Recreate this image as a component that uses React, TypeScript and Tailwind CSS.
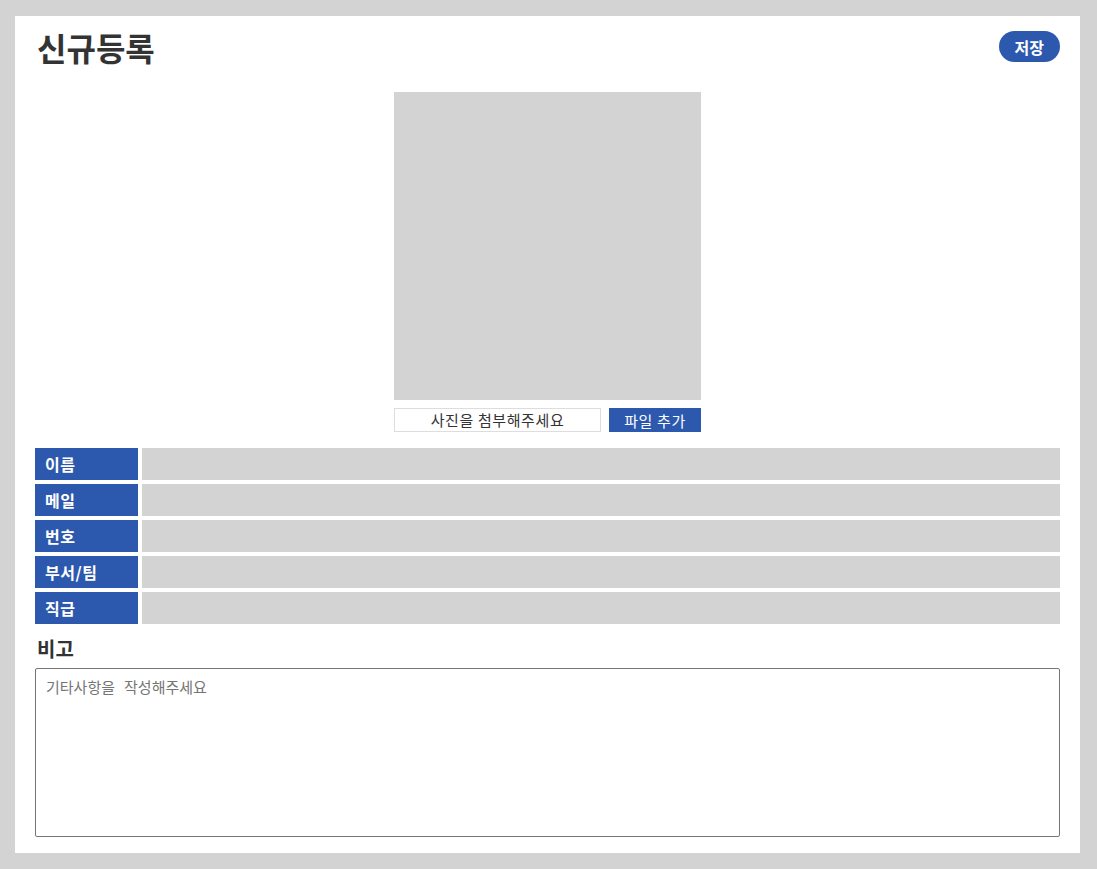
import React from 'react';

const fields = ['이름', '메일', '번호', '부서/팀', '직급'];

export default function App() {
    return (
        <div className="min-h-[869px] bg-[#d3d3d3] pl-[15px] pr-[17px] pt-[16px] pb-[16px] font-['Noto_Sans_CJK_KR',sans-serif]">
            <div className="bg-white px-[20px] pb-[16px]">
                {/* Header */}
                <div className="flex items-center justify-between h-[61px] pl-[2px]">
                    <h1 className="text-[32px] font-bold text-[#333] leading-none">신규등록</h1>
                    <button className="h-[31px] px-[16px] rounded-full bg-[#2c59ae] text-white text-[16px] font-bold leading-none">
                        저장
                    </button>
                </div>

                {/* Photo */}
                <div className="flex flex-col items-center mt-[15px]">
                    <div className="w-[307px] h-[308px] bg-[#d3d3d3]" />
                    <div className="flex gap-[8px] mt-[8px]">
                        <div className="w-[207px] h-[24px] border border-[#ddd] flex items-center justify-center text-[15px] tracking-[0.6px] text-[#333]">
                            사진을 첨부해주세요
                        </div>
                        <button className="w-[92px] h-[24px] bg-[#2c59ae] text-white text-[15px] tracking-[0.6px] leading-none">
                            파일 추가
                        </button>
                    </div>
                </div>

                {/* Fields */}
                <div className="flex flex-col gap-[4px] mt-[16px]">
                    {fields.map((f) => (
                        <div key={f} className="flex gap-[4px] h-[32px]">
                            <div className="w-[103px] bg-[#2c59ae] text-white text-[16px] tracking-[0.5px] font-bold flex items-center pl-[10px]">
                                {f}
                            </div>
                            <div className="flex-1 bg-[#d3d3d3]" />
                        </div>
                    ))}
                </div>

                {/* Notes */}
                <h2 className="text-[20px] font-bold text-[#333] mt-[12px] mb-[6px] leading-[26px] pl-[2px]">비고</h2>
                <textarea
                    className="block w-full h-[169px] border border-[#767676] rounded-[2px] px-[10px] py-[8px] text-[15px] tracking-[0px] font-['DejaVu_Sans_Mono','Noto_Sans_CJK_KR',monospace] placeholder:text-[#757575] resize-none"
                    placeholder="기타사항을 작성해주세요"
                />
            </div>
        </div>
    );
}
